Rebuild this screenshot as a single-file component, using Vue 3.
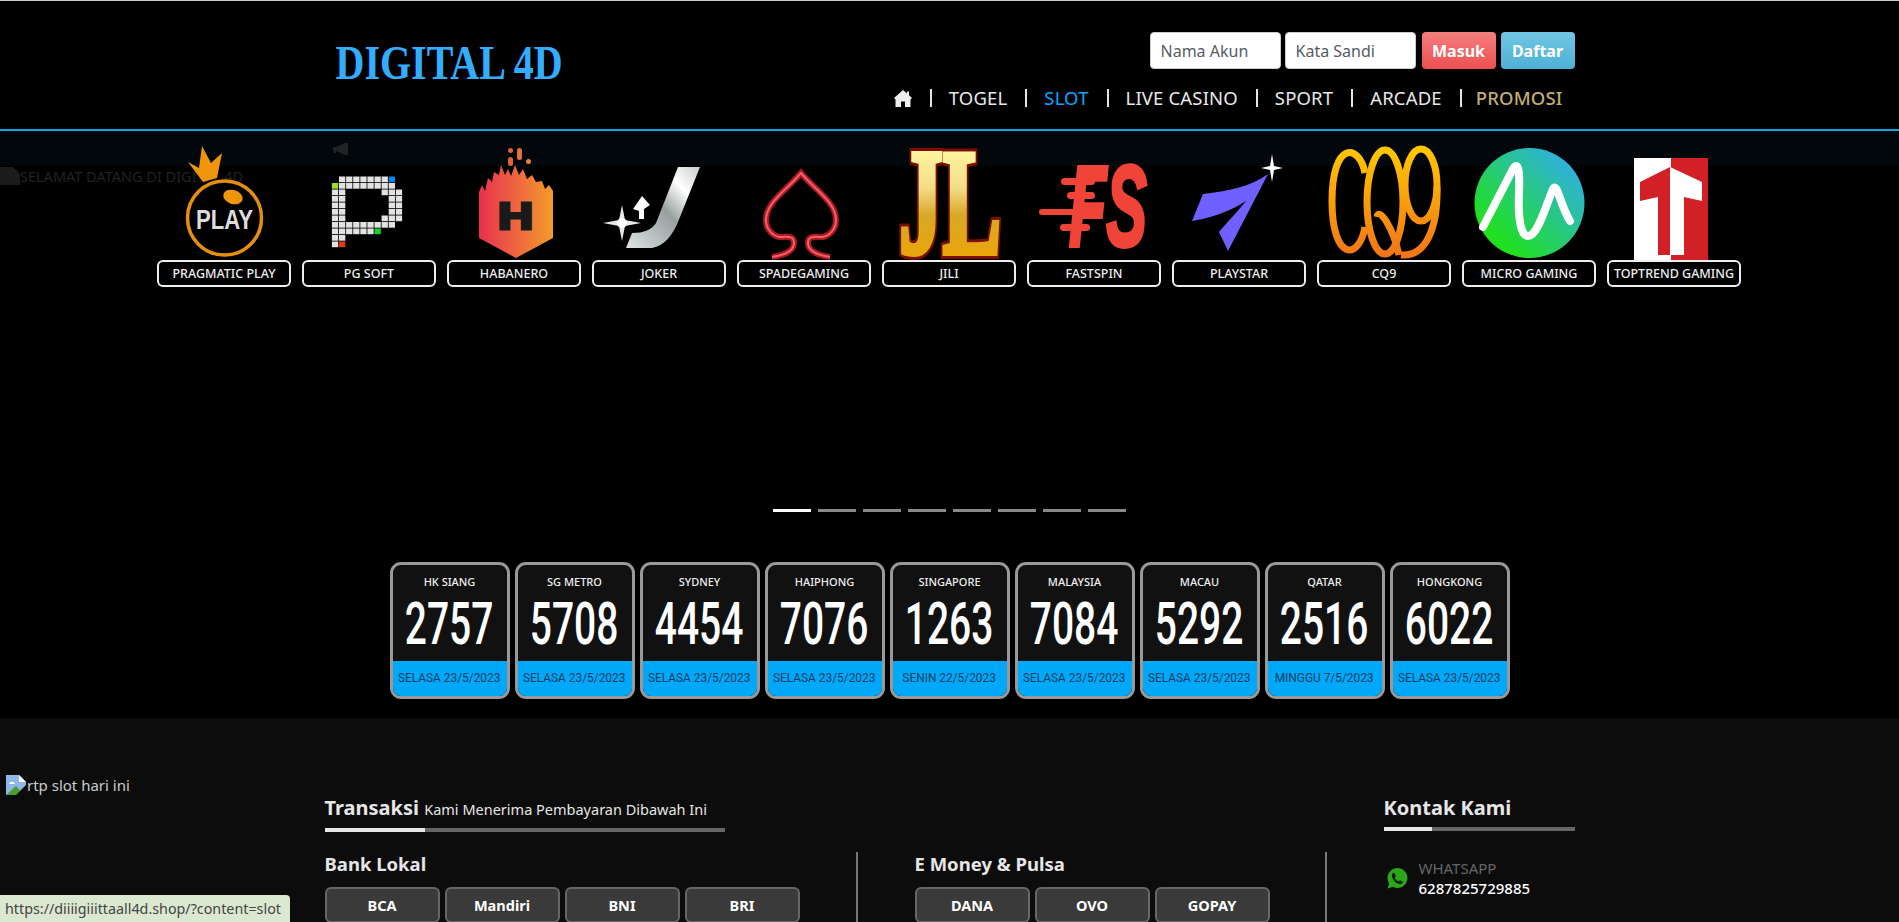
<template>
  <div class="page">
    <!-- Header -->
    <header class="site-header">
      <div class="header-inner">
        <a class="logo">DIGITAL 4D</a>
        <div class="header-right">
          <form class="login" @submit.prevent>
            <input class="login-input" type="text" placeholder="Nama Akun" />
            <input class="login-input" type="password" placeholder="Kata Sandi" />
            <button class="btn-login">Masuk</button>
            <button class="btn-register">Daftar</button>
          </form>
          <nav class="main-nav">
            <svg class="home" viewBox="0 0 18 17"><path d="M9 0 13 3.500V1.500H15V5.200L18 8 16.500 9.500V17H11V11.500H7V17H1.500V9.500L0 8Z" fill="#eee" /></svg>
            <template v-for="item in navItems" :key="item.label">
              <span class="sep"></span>
              <a :class="['nav-link', item.cls]">{{ item.label }}</a>
            </template>
          </nav>
        </div>
      </div>
    </header>

    <!-- Hero -->
    <section class="hero">
      <div class="news-band">
        <svg class="speaker" viewBox="0 0 15 12"><path d="M0 4H3L12 0H15V12H12L3 8V10H1V8H0Z" fill="#222" /></svg>
      </div>
      <div class="welcome">
        <svg class="broken dim" viewBox="0 0 20 18"><path d="M0 0H13L20 7V18H0Z" fill="#1c1c1c" /></svg>
        <span>SELAMAT DATANG DI DIGITAL 4D</span>
      </div>

      <div class="providers">
        <div v-for="p in providers" :key="p.id" class="provider">
          <svg class="provider-logo" viewBox="0 0 134 115">
            <template v-if="p.id === 'pragmatic'">
              <path d="M31 17 42 23 45 1 54 18 65 8 60 33 46 37Z" fill="#ee950c" />
              <circle cx="67.500" cy="73" r="37" fill="#000" stroke="#e5900c" stroke-width="3.500" />
              <ellipse cx="76" cy="52" rx="10" ry="7" transform="rotate(18 76 52)" fill="#ee950c" />
              <text x="39" y="84" class="logo-play" textLength="57" lengthAdjust="spacingAndGlyphs">PLAY</text>
            </template>
            <template v-else-if="p.id === 'pgsoft'">
              <rect v-for="(c, i) in pgCells" :key="i" :x="c.x + 0.500" :y="c.y + 0.500" width="6.300" height="5.700" :fill="c.fill" />
            </template>
            <template v-else-if="p.id === 'habanero'">
              <defs>
                <linearGradient id="habGrad" x1="0" x2="1" y1="0" y2="0">
                  <stop offset="0" stop-color="#e8304f" />
                  <stop offset="1" stop-color="#f49b2b" />
                </linearGradient>
              </defs>
              <path d="M32 47 35 40 38 46 41 33 45 37 47 27 52 30 54 20 58 30 61 24 64 31 68 20 72 30 76 24 80 34 85 30 89 37 95 36 98 44 102 40 106 46V93L69 113 32 93Z" fill="url(#habGrad)" />
              <rect x="61" y="3" width="5" height="5" rx="2.500" fill="#e2603a" />
              <rect x="70" y="3" width="5" height="12" rx="2.500" fill="#e2703a" />
              <rect x="61" y="12" width="5" height="9" rx="2.500" fill="#e2603a" />
              <rect x="79" y="14" width="5" height="5" rx="2.500" fill="#e8803a" />
              <text x="51" y="84" class="logo-hab" textLength="35" lengthAdjust="spacingAndGlyphs">H</text>
            </template>
            <template v-else-if="p.id === 'joker'">
              <defs>
                <linearGradient id="jokGrad" x1="0" x2="1" y1="1" y2="0">
                  <stop offset="0" stop-color="#dfe4e4" />
                  <stop offset="0.500" stop-color="#98a09f" />
                  <stop offset="0.750" stop-color="#fff" />
                  <stop offset="1" stop-color="#c8cccc" />
                </linearGradient>
              </defs>
              <path d="M86 22H108L88 72Q78 100 60 103H34L40 88Q58 88 64 78Z" fill="url(#jokGrad)" />
              <path d="M50 51 58 60 52 64 52 74H47L47 66 41 64Z" fill="#fff" />
              <path d="M30 60 33 75 49 78 33 81 30 96 27 81 11 78 27 75Z" fill="#e8e8e8" />
              <circle cx="30" cy="78" r="5" fill="#fff" />
            </template>
            <template v-else-if="p.id === 'spade'">
              <path class="spade-glow" d="M35 112C48 110 57 106 57 98 57 90 50 92 42 92 34 90 29 83 29 75 29 57 50 45 64 28 78 45 99 57 99 75 99 83 94 90 86 92 78 92 71 90 71 98 71 106 80 110 93 112" />
              <path class="spade-line" d="M35 112C48 110 57 106 57 98 57 90 50 92 42 92 34 90 29 83 29 75 29 57 50 45 64 28 78 45 99 57 99 75 99 83 94 90 86 92 78 92 71 90 71 98 71 106 80 110 93 112" />
            </template>
            <template v-else-if="p.id === 'jili'">
              <defs>
                <linearGradient id="jlGrad" gradientUnits="userSpaceOnUse" x1="0" x2="0" y1="5" y2="113">
                  <stop offset="0" stop-color="#fff6a0" />
                  <stop offset="0.350" stop-color="#f4dc88" />
                  <stop offset="0.600" stop-color="#d8a828" />
                  <stop offset="1" stop-color="#eaa50a" />
                </linearGradient>
              </defs>
              <text x="17" y="108" class="logo-jl under" textLength="102" lengthAdjust="spacingAndGlyphs">JL</text>
              <text x="17" y="108" class="logo-jl" textLength="102" lengthAdjust="spacingAndGlyphs">JL</text>
            </template>
            <template v-else-if="p.id === 'fastspin'">
              <rect x="34" y="33" width="34" height="7" rx="3.500" fill="#f04438" />
              <rect x="40" y="47" width="28" height="7" rx="3.500" fill="#f04438" />
              <rect x="12" y="64" width="50" height="6" rx="3" fill="#f04438" />
              <rect x="33" y="79" width="30" height="7" rx="3.500" fill="#f04438" />
              <text x="42" y="101" class="logo-fs" textLength="78" lengthAdjust="spacingAndGlyphs">FS</text>
            </template>
            <template v-else-if="p.id === 'playstar'">
              <path d="M96 29 C78 42 56 46 31 49L20 76C45 72 68 62 82 50Z" fill="#7060ff" />
              <path d="M96 29 56 106 47 87C58 74 68 64 79 50Z" fill="#7060ff" />
              <path d="M100 9 102 21 111 23 102 25 100 37 98 25 89 23 98 21Z" fill="#fff" />
            </template>
            <template v-else-if="p.id === 'cq9'">
              <defs>
                <linearGradient id="cqGrad" gradientUnits="userSpaceOnUse" x1="0" x2="0" y1="2" y2="113">
                  <stop offset="0" stop-color="#ffc800" />
                  <stop offset="1" stop-color="#f27318" />
                </linearGradient>
              </defs>
              <path class="cq-ring" d="M48 28C42 -2 15 -4 15 56 15 116 42 116 48 82" />
              <ellipse class="cq-ring" cx="68" cy="57" rx="18" ry="52" />
              <path class="cq-ring" d="M60 72C62 62 76 82 82 110" />
              <ellipse class="cq-ring" cx="104" cy="40" rx="16" ry="36" />
              <path class="cq-ring" d="M120 42C121 85 108 112 84 110" />
            </template>
            <template v-else-if="p.id === 'micro'">
              <defs>
                <linearGradient id="mgGrad" x1="0" x2="1" y1="1" y2="0">
                  <stop offset="0.200" stop-color="#20e020" />
                  <stop offset="0.900" stop-color="#30aee8" />
                </linearGradient>
              </defs>
              <ellipse cx="67.500" cy="58" rx="55" ry="55" fill="url(#mgGrad)" />
              <path class="mg-stroke" d="M21 82 51 24C56 16 58 24 57 48 56 70 58 91 66 91 76 91 84 60 91 44 95 36 98 60 108 76" />
            </template>
            <template v-else>
              <rect x="27" y="13" width="37" height="102" fill="#fff" />
              <rect x="64" y="13" width="37" height="102" fill="#d32027" />
              <path d="M63 22 33 37V56L51 52V110H63Z" fill="#d32027" />
              <path d="M63 22 95 37V56L77 52V110H63Z" fill="#fff" />
            </template>
          </svg>
          <div class="provider-name">{{ p.name }}</div>
        </div>
      </div>

      <div class="dots">
        <span v-for="n in 8" :key="n" :class="['dot', { active: n === 1 }]"></span>
      </div>

      <div class="results">
        <div v-for="r in results" :key="r.name" class="result">
          <div class="result-top">
            <div class="result-name">{{ r.name }}</div>
            <div class="result-num"><span>{{ r.num }}</span></div>
          </div>
          <div class="result-date"><span>{{ r.date }}</span></div>
        </div>
      </div>
    </section>

    <!-- Footer -->
    <footer class="site-footer">
      <div class="rtp-alt">
        <svg class="broken" viewBox="0 0 20 20">
          <path d="M0 0H13L20 7V20H0Z" fill="#8fb8e8" />
          <path d="M13 0 20 7H13Z" fill="#fff" />
          <path d="M3 9C4 6 8 6 9 9H3Z" fill="#fff" />
          <path d="M0 20 10 11 18 20Z" fill="#4f9c2f" />
          <path d="M10 20 20 10V20Z" fill="#0c0c0c" />
        </svg>
        <span>rtp slot hari ini</span>
      </div>
      <div class="footer-grid">
        <div class="pay-col">
          <div class="section-title">
            <span><b>Transaksi</b> <small>Kami Menerima Pembayaran Dibawah Ini</small></span>
            <div class="rule"><i></i></div>
          </div>
          <div class="pay-groups">
            <div class="pay-group bank">
              <h4>Bank Lokal</h4>
              <div class="pay-buttons">
                <button v-for="b in banks" :key="b" class="pay-btn">{{ b }}</button>
              </div>
            </div>
            <div class="pay-group emoney">
              <h4>E Money &amp; Pulsa</h4>
              <div class="pay-buttons">
                <button v-for="b in wallets" :key="b" class="pay-btn">{{ b }}</button>
              </div>
            </div>
          </div>
        </div>
        <div class="contact-col">
          <div class="section-title contact-title">
            <span><b>Kontak Kami</b></span>
            <div class="rule short"><i></i></div>
          </div>
          <div class="contact-row">
            <svg class="wa" viewBox="0 0 21 22">
              <path d="M10.500 1C16 1 20.500 5.500 20.500 11S16 21 10.500 21C8.800 21 7.200 20.600 5.800 19.800L.5 21.500 2.100 16.400C1.200 14.800.5 13 .5 11 .5 5.500 5 1 10.500 1Z" fill="#2aa81a" />
              <path d="M7 5.500 9 9 7.800 10.800C8.500 12.500 9.800 13.800 11.500 14.500L13 13.200 16 15C15.500 16.800 13.800 17.500 12 17 8.500 16 5.800 13 5 9.500 4.700 7.800 5.300 6 7 5.500Z" fill="#0c1f0a" />
            </svg>
            <div>
              <div class="contact-label">WHATSAPP</div>
              <div class="contact-value">6287825729885</div>
            </div>
          </div>
        </div>
      </div>
    </footer>

    <div class="status-bubble">https://diiiigiiittaall4d.shop/?content=slot</div>
  </div>
</template>

<script setup>
const navItems = [
  { label: 'TOGEL' },
  { label: 'SLOT', cls: 'current' },
  { label: 'LIVE CASINO' },
  { label: 'SPORT' },
  { label: 'ARCADE' },
  { label: 'PROMOSI', cls: 'promo' }
]

const providers = [
  { id: 'pragmatic', name: 'PRAGMATIC PLAY' },
  { id: 'pgsoft', name: 'PG SOFT' },
  { id: 'habanero', name: 'HABANERO' },
  { id: 'joker', name: 'JOKER' },
  { id: 'spade', name: 'SPADEGAMING' },
  { id: 'jili', name: 'JILI' },
  { id: 'fastspin', name: 'FASTSPIN' },
  { id: 'playstar', name: 'PLAYSTAR' },
  { id: 'cq9', name: 'CQ9' },
  { id: 'micro', name: 'MICRO GAMING' },
  { id: 'toptrend', name: 'TOPTREND GAMING' }
]

// pg soft logo pixels: . empty, x light, b blue, y lime, g green, r red
const pgRows = [
  '.xxxxxxxb.',
  'yxxxxxxxx.',
  'xx.....xxx',
  'xx......xx',
  'xx......xx',
  'xx......xx',
  'xx.....xxx',
  'xxxxxxxxx.',
  'xxxxxxg...',
  'xx........',
  'xr........'
]
const pgColors = { x: '#e2e2e2', b: '#0a84f0', y: '#9be01e', g: '#12d82a', r: '#e03a14' }
const pgCells = []
pgRows.forEach((row, r) => {
  row.split('').forEach((ch, c) => {
    if (ch !== '.') pgCells.push({ x: 29.400 + c * 7.100, y: 31 + r * 6.500, fill: pgColors[ch] })
  })
})

const results = [
  { name: 'HK SIANG', num: '2757', date: 'SELASA 23/5/2023' },
  { name: 'SG METRO', num: '5708', date: 'SELASA 23/5/2023' },
  { name: 'SYDNEY', num: '4454', date: 'SELASA 23/5/2023' },
  { name: 'HAIPHONG', num: '7076', date: 'SELASA 23/5/2023' },
  { name: 'SINGAPORE', num: '1263', date: 'SENIN 22/5/2023' },
  { name: 'MALAYSIA', num: '7084', date: 'SELASA 23/5/2023' },
  { name: 'MACAU', num: '5292', date: 'SELASA 23/5/2023' },
  { name: 'QATAR', num: '2516', date: 'MINGGU 7/5/2023' },
  { name: 'HONGKONG', num: '6022', date: 'SELASA 23/5/2023' }
]

const banks = ['BCA', 'Mandiri', 'BNI', 'BRI']
const wallets = ['DANA', 'OVO', 'GOPAY']
</script>

<style>
html, body {
  margin: 0;
  background: #000;
}
</style>

<style scoped>
.page {
  position: relative;
  height: 922px;
  overflow: hidden;
  background: #000;
  border-top: 1px solid #ccc;
  box-sizing: border-box;
  font-family: "Noto Sans", sans-serif;
  color: #eee;
}

.site-header {
  height: 128px;
  border-bottom: 2px solid #0ea5e0;
}

.header-inner {
  width: 1250px;
  margin: 0 auto;
  display: flex;
  justify-content: space-between;
}

.logo {
  margin: 40px 0 0 11px;
  height: 44px;
  font-family: "Liberation Serif", serif;
  font-weight: 700;
  font-size: 40px;
  line-height: 44px;
  color: #33adff;
  transform: scaleY(1.2);
}

.header-right {
  display: flex;
  flex-direction: column;
  align-items: flex-end;
}

.login {
  display: flex;
  margin-top: 31px;
}

.login-input {
  width: 131px;
  height: 37px;
  box-sizing: border-box;
  margin-right: 4px;
  padding: 0 10px;
  border: 1px solid #ccc;
  border-radius: 4px;
  background: #fff;
  font-family: inherit;
  font-size: 16px;
}

.login-input::placeholder {
  color: #555c64;
  opacity: 1;
}

.btn-login,
.btn-register {
  width: 74px;
  height: 37px;
  border: 0;
  border-radius: 4px;
  color: #fff;
  font-family: inherit;
  font-size: 16px;
  font-weight: 700;
  padding: 0;
}

.btn-login {
  margin-left: 2px;
  margin-right: 5px;
  background: linear-gradient(#f37f7f, #ee4f4f);
}

.btn-register {
  background: linear-gradient(#72c6e2, #4eb0d6);
}

.main-nav {
  display: flex;
  align-items: center;
  margin-top: 11px;
  margin-right: 12px;
  height: 36px;
}

.home {
  width: 18px;
  height: 17px;
}

.sep {
  width: 2px;
  height: 18px;
  margin: 0 17px 0 18px;
  background: #e4e4e4;
}

.nav-link {
  font-size: 18.500px;
  line-height: 24px;
  letter-spacing: 0.15px;
  color: #e8e8e8;
}

.nav-link.current {
  color: #0aa5ff;
}

.nav-link.promo {
  margin-left: -3px;
  color: #c2ad72;
  font-weight: 500;
}

/* hero */
.hero {
  position: relative;
  height: 587px;
}

.news-band {
  height: 35px;
  background: #02070b;
  box-sizing: border-box;
  padding: 12px 0 0 333px;
}

.speaker {
  display: block;
  width: 15px;
  height: 12px;
}

.welcome {
  display: flex;
  align-items: center;
  height: 18px;
  margin-top: 1px;
  font-size: 14.500px;
  color: #222;
  white-space: nowrap;
}

.broken {
  width: 20px;
  height: 18px;
  flex: none;
}

.providers {
  position: absolute;
  top: 14px;
  left: 157px;
  display: flex;
  gap: 11px;
}

.provider {
  width: 134px;
}

.provider-logo {
  display: block;
  width: 134px;
  height: 115px;
  overflow: visible;
}

.provider-name {
  position: relative;
  height: 27px;
  box-sizing: border-box;
  border: 2px solid #eee;
  border-radius: 6px;
  background: #000;
  font-size: 12.500px;
  font-weight: 500;
  line-height: 23px;
  text-align: center;
  white-space: nowrap;
}

.logo-play {
  font-family: "Liberation Sans", sans-serif;
  font-weight: 700;
  font-size: 27px;
  fill: #ddd;
}

.logo-hab {
  font-family: "Liberation Sans", sans-serif;
  font-weight: 700;
  font-size: 36px;
  fill: #1a1a1a;
  stroke: #1a1a1a;
  stroke-width: 3px;
}

.spade-glow {
  fill: none;
  stroke: #b01822;
  stroke-width: 6px;
}

.spade-line {
  fill: none;
  stroke: #f0606c;
  stroke-width: 2px;
}

.logo-jl {
  font-family: "Liberation Serif", serif;
  font-weight: 700;
  font-size: 150px;
  fill: url(#jlGrad);
  stroke: url(#jlGrad);
  stroke-width: 6px;
}

.logo-jl.under {
  stroke: #7a1000;
  stroke-width: 12px;
}

.logo-fs {
  font-family: "Liberation Sans", sans-serif;
  font-weight: 700;
  font-style: italic;
  font-size: 115px;
  fill: #f04438;
  stroke: #f04438;
  stroke-width: 4px;
}

.cq-ring {
  fill: none;
  stroke: url(#cqGrad);
  stroke-width: 7px;
}

.mg-stroke {
  fill: none;
  stroke: #fff;
  stroke-width: 8px;
  stroke-linecap: round;
  stroke-linejoin: round;
}

.dots {
  display: flex;
  justify-content: center;
  gap: 7px;
  margin-top: 324px;
}

.dot {
  width: 38px;
  height: 3px;
  background: #888;
}

.dot.active {
  background: #fff;
}

.results {
  display: flex;
  justify-content: center;
  gap: 5px;
  margin-top: 50px;
}

.result {
  width: 120px;
  height: 137px;
  box-sizing: border-box;
  border: 3px solid #999;
  border-radius: 11px;
  overflow: hidden;
  display: flex;
  flex-direction: column;
  background: #111;
}

.result-top {
  flex: 1;
  text-align: center;
}

.result-name {
  margin-top: 9px;
  font-size: 11px;
  line-height: 15px;
  font-weight: 500;
}

.result-num {
  display: flex;
  justify-content: center;
  font-family: Roboto, sans-serif;
  font-size: 59px;
  font-weight: 500;
  line-height: 60px;
  margin-top: 5px;
  color: #fff;
}

.result-num span {
  flex: none;
  transform: scaleX(0.66);
}

.result-date {
  display: flex;
  justify-content: center;
  height: 35px;
  background: #00a8fa;
  font-family: Roboto, sans-serif;
  font-size: 13.500px;
  line-height: 32px;
  color: #0a3d5e;
  white-space: nowrap;
}

.result-date span {
  flex: none;
  transform: scaleX(0.88);
}

/* footer */
.site-footer {
  position: relative;
  height: 204px;
  background: #0c0c0c;
}

.rtp-alt {
  position: absolute;
  top: 57px;
  left: 6px;
  display: flex;
  align-items: center;
  font-size: 15px;
  color: #ccc;
}

.rtp-alt .broken {
  height: 20px;
  margin-right: 1px;
}

.footer-grid {
  width: 1250px;
  margin: 0 auto;
  padding-top: 76px;
  display: flex;
  justify-content: space-between;
}

.pay-col {
  width: 1002px;
}

.section-title {
  font-size: 20px;
  line-height: 28px;
  color: #e6e6e6;
}

.section-title small {
  font-size: 14.500px;
}

.rule {
  width: 400px;
  height: 4px;
  margin-top: 5px;
  background: #666;
}

.rule i {
  display: block;
  width: 100px;
  height: 4px;
  background: #e6e6e6;
}

.rule.short {
  width: 191px;
}

.rule.short i {
  width: 48px;
}

.pay-groups {
  display: flex;
  margin-top: 20px;
}

.pay-group h4 {
  margin: 0 0 10px;
  font-size: 18.500px;
  line-height: 24px;
  padding-bottom: 1px;
  color: #e6e6e6;
}

.bank {
  width: 531px;
}

.emoney {
  width: 471px;
  box-sizing: border-box;
  padding-left: 57px;
  border-left: 2px solid #777;
  border-right: 2px solid #777;
}

.pay-buttons {
  display: flex;
  gap: 5px;
}

.pay-btn {
  width: 115px;
  height: 36px;
  padding: 0;
  box-sizing: border-box;
  border: 2px solid #666;
  border-radius: 6px;
  background: #3a3a3a;
  color: #fff;
  font-family: inherit;
  font-size: 14.500px;
  font-weight: 700;
}

.contact-col {
  width: 191px;
}

.contact-row {
  display: flex;
  align-items: center;
  gap: 11px;
  margin-top: 27px;
  padding-left: 3px;
}

.wa {
  width: 21px;
  height: 22px;
}

.contact-label {
  font-size: 15px;
  line-height: 20px;
  color: #666;
}

.contact-value {
  font-size: 15px;
  line-height: 20px;
  font-weight: 500;
  color: #fff;
}

.status-bubble {
  position: absolute;
  left: 0;
  bottom: 0;
  height: 27px;
  box-sizing: border-box;
  padding: 0 9px 0 5px;
  border-top-right-radius: 4px;
  background: #dbe8d0;
  font-size: 14.300px;
  line-height: 27px;
  color: #444;
  white-space: nowrap;
}
</style>
